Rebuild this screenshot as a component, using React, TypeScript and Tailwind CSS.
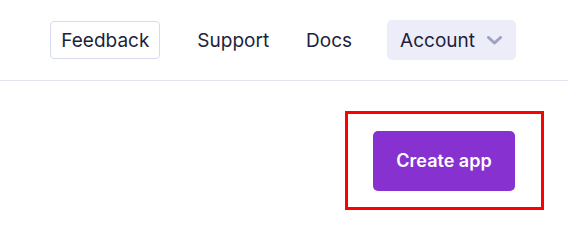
import React from "react";

export default function App() {
  return (
    <div className="w-[568px] h-[248px] bg-white" style={{ fontFamily: "Inter, 'Noto Sans', sans-serif" }}>
      <header className="h-[81px] border-b border-[#e1e2f2] flex items-center justify-end pr-[52px]">
        <div className="flex items-center text-[19px] text-[#1c1f3c]">
          <button className="h-[38px] px-[10px] border border-[#d8dbee] rounded-[4px] bg-white leading-none">Feedback</button>
          <a className="ml-[37px] leading-none">Support</a>
          <a className="ml-[37px] leading-none">Docs</a>
          <button className="ml-[35px] h-[40px] pl-[13px] pr-[14px] bg-[#ecedf9] rounded-[5px] flex items-center leading-none">
            <span>Account</span>
            <svg width="15" height="9" viewBox="0 0 15 9" className="ml-[12px]">
              <path d="M1.5 1.5 L7.5 7 L13.5 1.5" fill="none" stroke="#9ea1c4" strokeWidth="3" strokeLinecap="round" strokeLinejoin="round" />
            </svg>
          </button>
        </div>
      </header>
      <main className="flex justify-end pr-[24px] pt-[30px]">
        <div className="border-[3px] border-[#ff0000] pt-[17px] pb-[16px] pl-[25px] pr-[26px]">
          <button className="w-[142px] h-[60px] bg-[#8731d0] rounded-[5px] text-white text-[18px] font-semibold leading-none">
            Create app
          </button>
        </div>
      </main>
    </div>
  );
}
